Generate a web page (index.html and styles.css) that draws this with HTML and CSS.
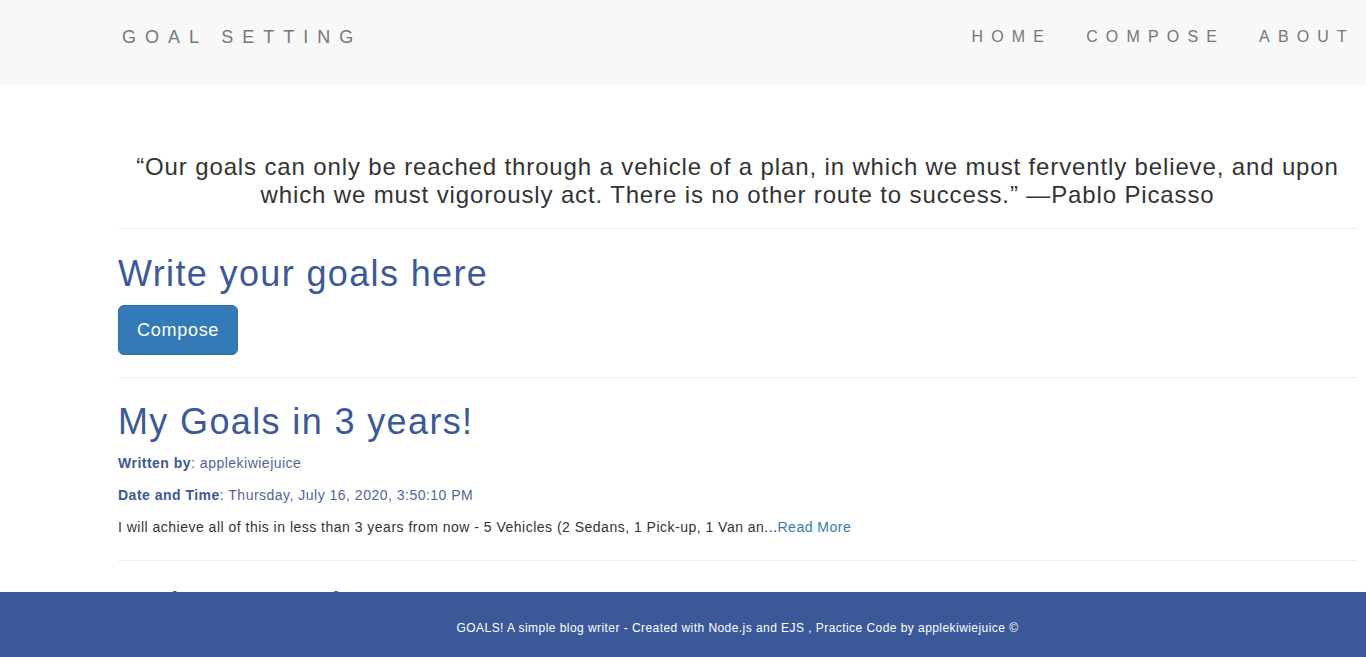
FILE: index.html
```html
<!DOCTYPE html>
<html lang="en">
<head>
<meta charset="utf-8">
<title>Goal Setting</title>
<link rel="stylesheet" href="styles.css">
</head>
<body>
<nav class="navbar">
  <a class="brand" href="#">GOAL SETTING</a>
  <ul class="nav-links">
    <li><a href="#">HOME</a></li>
    <li><a href="#">COMPOSE</a></li>
    <li><a href="#">ABOUT</a></li>
  </ul>
</nav>
<main class="container">
  <p class="quote">“Our goals can only be reached through a vehicle of a plan, in which we must fervently believe, and upon which we must vigorously act. There is no other route to success.” —Pablo Picasso</p>
  <hr class="rule rule-quote">
  <h1 class="title">Write your goals here</h1>
  <a class="btn" href="#">Compose</a>
  <hr class="rule rule-btn">
  <article class="post">
    <h1 class="title">My Goals in 3 years!</h1>
    <p class="meta"><span class="label">Written by</span>: applekiwiejuice</p>
    <p class="meta"><span class="label">Date and Time</span>: Thursday, July 16, 2020, 3:50:10 PM</p>
    <p class="body-text">I will achieve all of this in less than 3 years from now - 5 Vehicles (2 Sedans, 1 Pick-up, 1 Van an...<a class="more" href="#">Read More</a></p>
    <hr class="rule rule-post">
  </article>
  <article class="post post-next">
    <h1 class="title">Today's Goals</h1>
    <p class="meta"><span class="label">Written by</span>: applekiwiejuice</p>
  </article>
</main>
<footer class="footer">
  <p>GOALS! A simple blog writer - Created with Node.js and EJS , Practice Code by applekiwiejuice ©</p>
</footer>
</body>
</html>
```
FILE: styles.css
```css
* { box-sizing: border-box; }
html, body { margin: 0; padding: 0; }
body {
  font-family: "Liberation Sans", Arial, Helvetica, sans-serif;
  font-size: 14px;
  line-height: 20px;
  letter-spacing: 0.035em;
  color: #333;
  background: #fff;
  padding-bottom: 80px;
}
a { text-decoration: none; }

.navbar {
  height: 85px;
  background: #f8f8f8;
  display: flex;
  align-items: center;
  justify-content: space-between;
  padding: 0 11px 11px 122px;
}
.brand {
  font-size: 18px;
  letter-spacing: 0.5em;
  color: #777;
  line-height: 20px;
}
.nav-links {
  list-style: none;
  margin: 0;
  padding: 0;
  display: flex;
  gap: 34px;
}
.nav-links a {
  font-size: 16px;
  letter-spacing: 0.51em;
  color: #777;
  line-height: 20px;
}

.container {
  padding: 0 9px 0 118px;
}
.quote {
  margin: 68px 0 0;
  font-size: 24px;
  line-height: 28px;
  letter-spacing: 0.036em;
  text-align: center;
  color: #333;
}
.rule {
  border: 0;
  border-top: 1px solid #eee;
  margin: 0;
  height: 0;
}
.rule-quote { margin-top: 19px; }
.rule-btn { margin-top: 22px; }
.rule-post { margin-top: 23px; }

.title {
  font-size: 36px;
  font-weight: 500;
  line-height: 40px;
  letter-spacing: 0.038em;
  color: #3b5998;
  margin: 25px 0 10px;
}
.btn {
  display: inline-block;
  background: #337ab7;
  border: 1px solid #2e6da4;
  color: #fff;
  font-size: 18px;
  line-height: 24px;
  letter-spacing: 0.04em;
  padding: 12px 18px;
  border-radius: 6px;
  margin-top: 1px;
}
.post .title { margin-top: 24px; margin-bottom: 11px; }
.post-next .title { margin-top: 25px; }
.meta {
  margin: 0 0 12px;
  color: #52659a;
}
.label {
  font-weight: bold;
  color: #3b5998;
}
.body-text {
  margin: 0;
  color: #333;
}
.more { color: #337ab7; }

.footer {
  position: fixed;
  left: 0;
  right: 0;
  bottom: 0;
  height: 65px;
  background: #3b5998;
  color: #fff;
  text-align: center;
  padding: 0 9px 0 118px;
}
.footer p {
  margin: 28px 0 0;
  font-size: 12px;
  line-height: 16px;
  letter-spacing: 0.037em;
}
```
